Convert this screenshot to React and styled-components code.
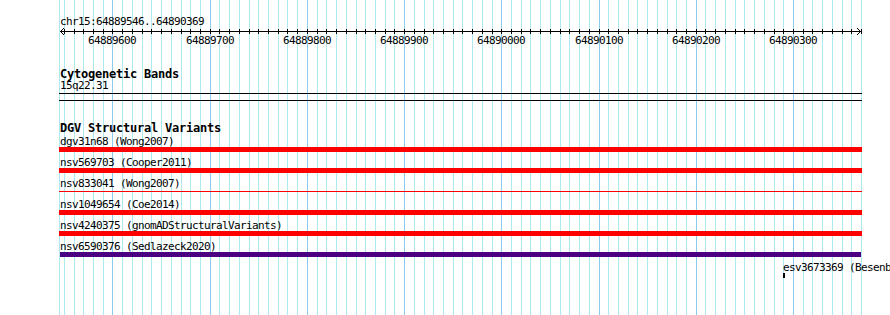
import React from 'react'
import styled, { createGlobalStyle } from 'styled-components'

// view: chr15:64889546..64890369 drawn into 801px starting at x=60
const VIEW_START = 64889546
const VIEW_END = 64890369
const PX_PER_BP = 801 / (VIEW_END - VIEW_START + 1)

const toX = bp => (bp - VIEW_START) * PX_PER_BP

const gridStops = []
for (let bp = Math.ceil(VIEW_START / 10) * 10; bp <= VIEW_END + 1; bp += 10) {
  gridStops.push(bp)
}

const majorStops = gridStops.filter(bp => bp % 100 === 0)

const features = [
  { name: 'dgv31n68', study: 'Wong2007', start: 64880000, end: 64900000, color: '#ff0000' },
  { name: 'nsv569703', study: 'Cooper2011', start: 64880000, end: 64900000, color: '#ff0000' },
  { name: 'nsv833041', study: 'Wong2007', start: 64880000, end: 64900000, color: '#ff0000', thin: true },
  { name: 'nsv1049654', study: 'Coe2014', start: 64880000, end: 64900000, color: '#ff0000' },
  { name: 'nsv4240375', study: 'gnomADStructuralVariants', start: 64880000, end: 64900000, color: '#ff0000' },
  { name: 'nsv6590376', study: 'Sedlazeck2020', start: 64889546, end: 64890370, color: '#4b0082', exact: true },
  { name: 'esv3673369', study: 'Besenbacher2015', start: 64890290, end: 64890292, color: '#000000', exact: true },
]

const GlobalStyle = createGlobalStyle`
  html, body {
    margin: 0;
    padding: 0;
    background: #fff;
    overflow: hidden;
  }
`

class App extends React.Component {
  render() {
    return (
      <Page>
        <GlobalStyle />
        <Grid>
          {/* left edge of the view */}
          <GridLine style={{ left: -1 }} />
          {gridStops.map(bp => (
            <GridLine key={bp} $major={bp % 100 === 0} style={{ left: Math.round(toX(bp)) }} />
          ))}
        </Grid>

        <Main>
          <Location>chr15:64889546..64890369</Location>

          <Ruler width="801" height="8">
            <line x1="0" y1="4.5" x2="801" y2="4.5" stroke="#000" />
            <polyline points="4,1 0.5,4.5 4,8" fill="none" stroke="#000" />
            <polyline points="797,1 800.5,4.5 797,8" fill="none" stroke="#000" />
            {gridStops.map(bp => (
              <line
                key={bp}
                x1={Math.round(toX(bp)) + 0.5}
                y1="2"
                x2={Math.round(toX(bp)) + 0.5}
                y2="7"
                stroke="#000"
              />
            ))}
          </Ruler>

          <TickLabels>
            {majorStops.map(bp => (
              <TickLabel key={bp} style={{ left: Math.round(toX(bp)) }}>
                {bp}
              </TickLabel>
            ))}
          </TickLabels>

          <TrackTitle $gap={22}>Cytogenetic Bands</TrackTitle>
          <Label>15q22.31</Label>
          <Band />

          <TrackTitle $gap={21}>DGV Structural Variants</TrackTitle>
          <Rows>
            {features.map(f => {
              const left = f.exact ? Math.max(0, toX(f.start)) : -1
              const right = f.exact ? Math.min(801, toX(f.end)) : 802
              return (
                <Row key={f.name}>
                  <Label style={{ paddingLeft: Math.max(0, Math.round(left)) }}>
                    {f.name} ({f.study})
                  </Label>
                  <Lane>
                    <Bar
                      $color={f.color}
                      $thin={f.thin}
                      style={{ left: Math.round(left), width: Math.max(2, Math.round(right - left)) }}
                    />
                  </Lane>
                </Row>
              )
            })}
          </Rows>
        </Main>
      </Page>
    )
  }
}

const Page = styled.div`
  position: relative;
  width: 890px;
  height: 315px;
  overflow: hidden;
  background: #fff;
  font-family: 'DejaVu Sans Mono', 'Liberation Mono', monospace;
  color: #000;
`

const Grid = styled.div`
  position: absolute;
  top: 0;
  bottom: 0;
  left: 60px;
  width: 803px;
`

const GridLine = styled.div`
  position: absolute;
  top: 0;
  bottom: 0;
  width: 1px;
  background: ${p => (p.$major ? '#8ccaee' : '#aee8f0')};
`

const Main = styled.div`
  position: relative;
  margin-left: 60px;
  width: 801px;
  padding-top: 16px;
  display: flex;
  flex-direction: column;
`

const Location = styled.div`
  font-size: 11px;
  line-height: 11px;
  height: 11px;
  letter-spacing: -0.62px;
  white-space: nowrap;
`

const Ruler = styled.svg`
  display: block;
  overflow: visible;
`

const TickLabels = styled.div`
  position: relative;
  height: 11px;
`

const TickLabel = styled.span`
  position: absolute;
  top: 0;
  transform: translateX(-50%);
  font-size: 11px;
  line-height: 11px;
  letter-spacing: -0.62px;
  white-space: nowrap;
`

const TrackTitle = styled.div`
  margin-top: ${p => p.$gap}px;
  font-size: 12px;
  line-height: 12px;
  height: 12px;
  font-weight: bold;
  letter-spacing: -0.22px;
  white-space: nowrap;
`

const Label = styled.div`
  font-size: 11px;
  line-height: 11px;
  height: 11px;
  letter-spacing: -0.62px;
  white-space: nowrap;
`

const Band = styled.div`
  margin-top: 2px;
  margin-left: -1px;
  width: 803px;
  height: 6px;
  border-top: 1px solid #000;
  border-bottom: 1px solid #000;
`

const Rows = styled.div`
  margin-top: 2px;
  display: flex;
  flex-direction: column;
  gap: 5px;
`

const Row = styled.div`
  display: flex;
  flex-direction: column;
`

const Lane = styled.div`
  position: relative;
  height: 5px;
`

const Bar = styled.div`
  position: absolute;
  top: ${p => (p.$thin ? '2px' : '0')};
  height: ${p => (p.$thin ? '1px' : '5px')};
  background: ${p => p.$color};
`

export default App
